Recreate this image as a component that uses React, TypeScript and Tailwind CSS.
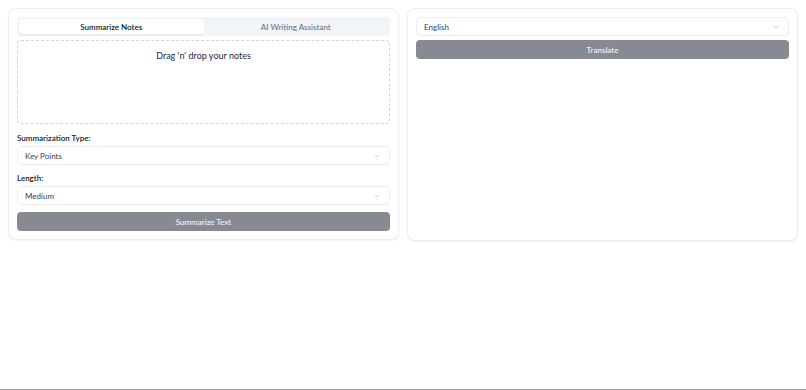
import React from 'react';
import { ChevronDown } from 'lucide-react';

const font = { fontFamily: 'Lato, "Noto Sans", "Liberation Sans", sans-serif' };

const SelectBox: React.FC<{ value: string }> = ({ value }) => (
  <div className="h-[19px] w-full flex items-center justify-between rounded-[4px] border border-[#eceef1] bg-white pl-[7px] pr-[8px] text-[8px] text-[#374151]">
    <span>{value}</span>
    <ChevronDown className="w-[8px] h-[8px] text-[#9ca3af]" strokeWidth={1.5} />
  </div>
);

const GrayButton: React.FC<{ label: string }> = ({ label }) => (
  <button className="h-[19px] w-full rounded-[4px] bg-[#878a93] text-[8px] font-semibold text-[#eef0f3] flex items-center justify-center">
    {label}
  </button>
);

export default function App() {
  return (
    <div style={font} className="min-h-screen bg-white border-b border-[#a3a3a3]">
      <div className="p-2 grid grid-cols-2 gap-2 items-start">
        {/* Summarize card */}
        <div className="rounded-[8px] border border-[#eceef1] bg-white p-2 shadow-[0_1px_2px_rgba(0,0,0,0.06)]">
          <div className="flex h-[19px] rounded-[4px] bg-[#f1f4f8] p-[2px]">
            <div className="flex-1 flex items-center justify-center rounded-[3px] bg-white text-[8px] font-semibold text-[#111827] shadow-[0_1px_2px_rgba(0,0,0,0.06)]">
              Summarize Notes
            </div>
            <div className="flex-1 flex items-center justify-center text-[8px] font-medium text-[#6b7280]">
              AI Writing Assistant
            </div>
          </div>
          <div className="mt-[4px] h-[84px] rounded-[4px] border border-dashed border-[#d1d5db] pt-[8px] text-center text-[9px] text-[#1f2937]">
            Drag 'n' drop your notes
          </div>
          <div className="mt-[8px] text-[8px] font-semibold leading-[12px] text-[#111827]">Summarization Type:</div>
          <div className="mt-[2px]">
            <SelectBox value="Key Points" />
          </div>
          <div className="mt-[7px] text-[8px] font-semibold leading-[12px] text-[#111827]">Length:</div>
          <div className="mt-[2px]">
            <SelectBox value="Medium" />
          </div>
          <div className="mt-[7px]">
            <GrayButton label="Summarize Text" />
          </div>
        </div>

        {/* Translate card */}
        <div className="h-[233px] rounded-[8px] border border-[#eceef1] bg-white p-2 shadow-[0_1px_2px_rgba(0,0,0,0.06)]">
          <SelectBox value="English" />
          <div className="mt-[4px]">
            <GrayButton label="Translate" />
          </div>
        </div>
      </div>
    </div>
  );
}
